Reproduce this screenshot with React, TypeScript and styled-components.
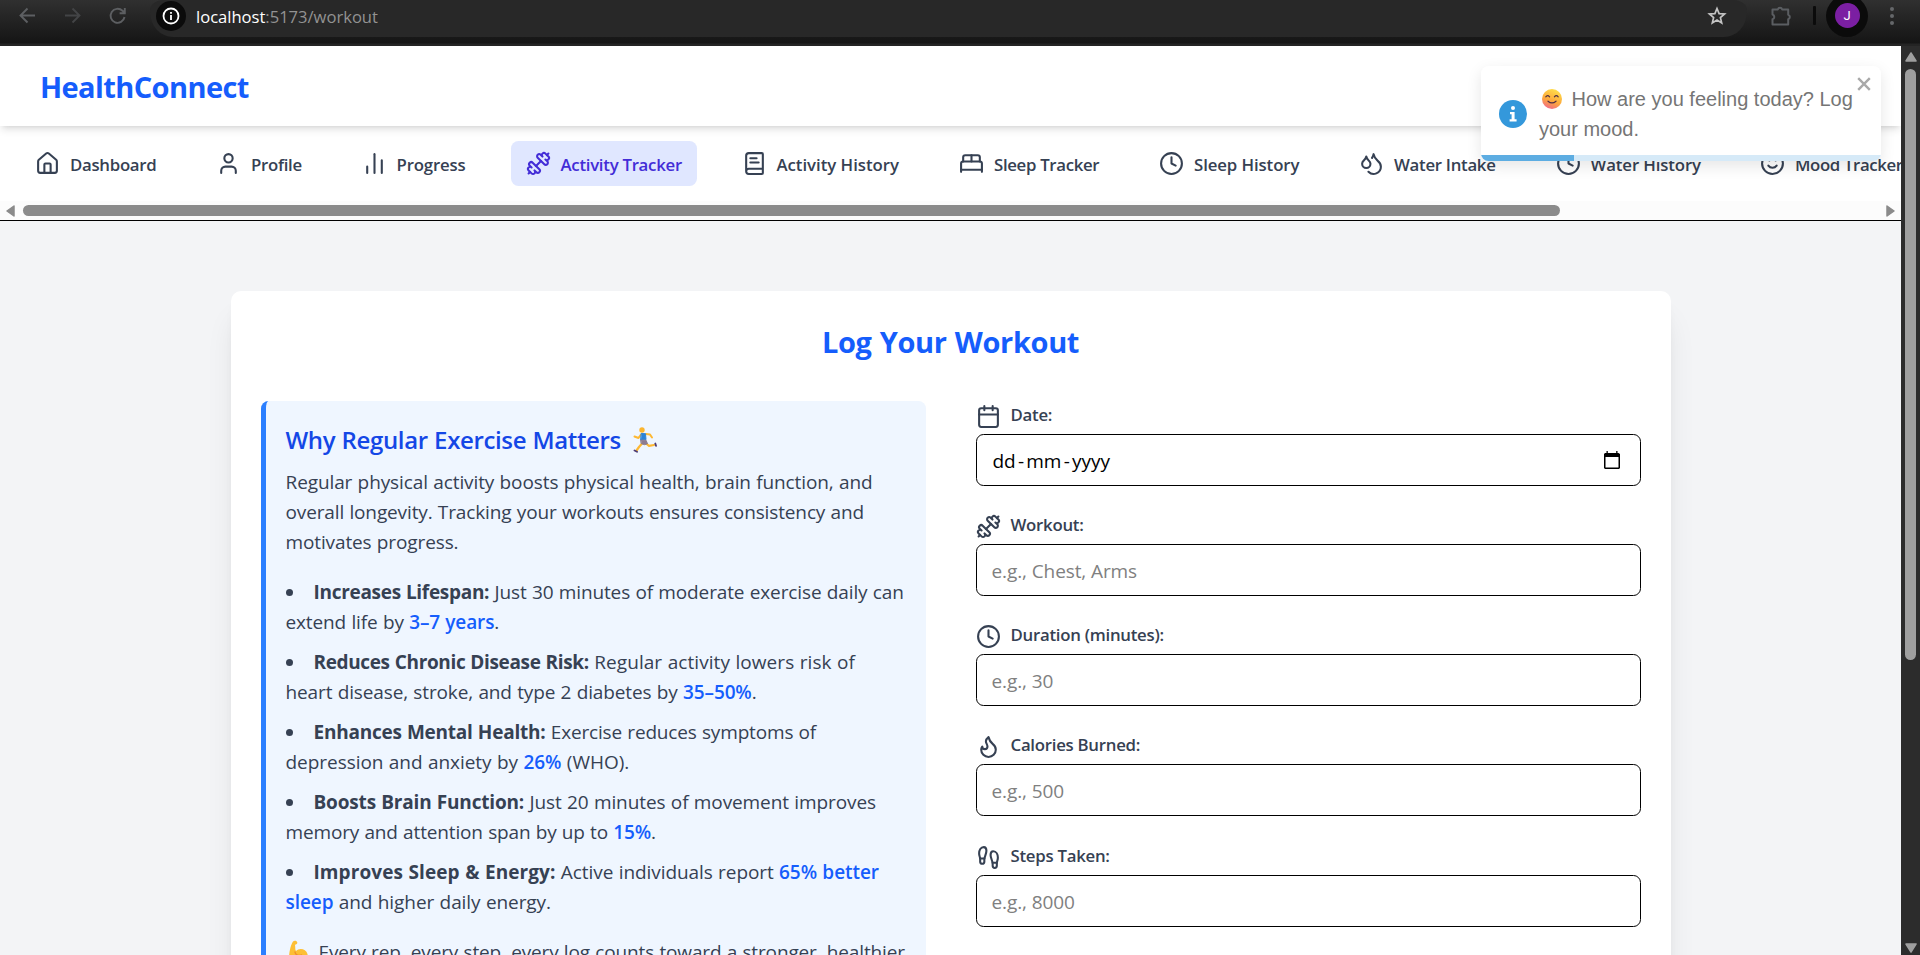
import React from "react";
import styled, { createGlobalStyle } from "styled-components";
import {
  BedDouble,
  BookText,
  Calendar,
  ChartNoAxesColumn,
  Clock,
  Droplets,
  Dumbbell,
  Flame,
  Footprints,
  House,
  Smile,
  User,
  type LucideIcon,
} from "lucide-react";

const GlobalStyle = createGlobalStyle`
  *, *::before, *::after { box-sizing: border-box; }
  html, body { margin: 0; padding: 0; overflow: hidden; }
  body { font-family: "Open Sans", "Noto Sans", sans-serif; color: #364153; }
  h1, h2, h3, p, ul { margin: 0; padding: 0; font-weight: inherit; }
`;

const Window = styled.div`
  display: flex;
  flex-direction: column;
  width: 1920px;
  height: 955px;
  overflow: hidden;
  background: #f3f4f6;
`;

/* ---------- Browser toolbar ---------- */

const BrowserBar = styled.div`
  display: flex;
  flex: none;
  height: 46px;
  padding-left: 18px;
  background: linear-gradient(#303030, #151515 43px, #242424 44px);
`;

const BrowserButtons = styled.div`
  display: flex;
  gap: 26px;
  width: 132px;
  height: 31px;
  align-items: center;
`;

const AddressBar = styled.div`
  display: flex;
  align-items: center;
  width: 1597px;
  height: 37px;
  padding: 0 20px 6px 6px;
  border-radius: 14px 14px 23px 23px / 10px 10px 25px 25px;
  background: #282828;
`;

const SiteInfo = styled.div`
  display: grid;
  place-items: center;
  width: 30px;
  height: 30px;
  border-radius: 50%;
  background: #0b0b0b;
`;

const Url = styled.div`
  flex: 1;
  padding: 2px 0 0 10px;
  font-size: 16.6px;
  letter-spacing: -0.02px;
  line-height: 24px;
  color: #929292;

  span {
    color: #fff;
  }
`;

const BrowserTools = styled.div`
  display: flex;
  align-items: center;
  height: 31px;
  padding-left: 23px;
`;

const ToolDivider = styled.div`
  width: 3px;
  height: 19px;
  margin: 0 10px 0 20px;
  border-radius: 1px;
  background: #0b0b0b;
`;

const AvatarRing = styled.div`
  display: grid;
  place-items: center;
  width: 42px;
  height: 42px;
  margin-right: 21px;
  border-radius: 50%;
  background: #0b0b0b;
`;

const Avatar = styled.div`
  display: grid;
  place-items: center;
  width: 25px;
  height: 25px;
  border-radius: 50%;
  background: #7b1fa2;
  color: #fff;
  font: 13px/25px Roboto, sans-serif;
`;

const Viewport = styled.div`
  display: flex;
  flex: 1;
  min-height: 0;
`;

const Page = styled.div`
  position: relative;
  width: 1901px;
  overflow: hidden;
`;

const VerticalScrollbar = styled.div`
  display: flex;
  flex-direction: column;
  align-items: center;
  width: 19px;
  padding: 6px 0 2px;
  background: #2c2c2c;
`;

const VerticalThumb = styled.div`
  width: 11px;
  height: 591px;
  margin: 7px 0 auto;
  border-radius: 6px;
  background: #9f9f9f;
`;

/* ---------- Page header and navigation ---------- */

const Header = styled.header`
  position: relative;
  z-index: 1;
  display: flex;
  align-items: center;
  height: 80px;
  padding: 2px 40px 0;
  background: #fff;
  box-shadow: 0 5px 7.5px -1px rgba(0, 0, 0, 0.1), 0 2.5px 5px -2.5px rgba(0, 0, 0, 0.1);
`;

const Brand = styled.h1`
  font-size: 29px;
  line-height: 40px;
  font-weight: 700;
  letter-spacing: -0.6px;
  color: #155dfc;
`;

const Nav = styled.nav`
  height: 95px;
  border-bottom: 1px solid #000;
  background: #fff;
  overflow: hidden;
`;

const NavList = styled.div`
  display: flex;
  gap: 30px;
  height: 75px;
  padding: 15px 20px;
`;

const NavItem = styled.a<{ $width: number; $track: number; $active?: boolean }>`
  display: flex;
  flex: none;
  align-items: center;
  gap: 10px;
  width: ${(p) => p.$width}px;
  height: 45px;
  padding: 0 0 0 15px;
  border-radius: 7.5px;
  background: ${(p) => (p.$active ? "#e0e7ff" : "transparent")};
  color: ${(p) => (p.$active ? "#432dd7" : "#364153")};
  font-size: 16.8px;
  font-weight: 600;
  letter-spacing: ${(p) => p.$track}px;
  line-height: 25px;
  white-space: nowrap;

  svg {
    flex: none;
  }
  span {
    padding-top: 1px;
  }
`;

const HorizontalScrollbar = styled.div`
  display: flex;
  align-items: center;
  height: 19px;
  padding: 0 6px;
  background: #fcfcfc;
`;

const HorizontalThumb = styled.div`
  width: 1537px;
  height: 11px;
  margin: 0 auto 0 8px;
  border-radius: 6px;
  background: #8b8b8b;
`;

/* ---------- Toast ---------- */

const Toast = styled.div`
  position: absolute;
  z-index: 2;
  top: 20px;
  right: 20px;
  display: flex;
  flex-direction: column;
  width: 400px;
  height: 95px;
  border-radius: 7.5px;
  background: #fff;
  box-shadow: 0 5px 15px rgba(0, 0, 0, 0.1);
  overflow: hidden;
`;

const ToastBody = styled.div`
  display: flex;
  flex: 1;
  align-items: center;
  gap: 12px;
  padding: 6px 8px 0 18px;
`;

const ToastText = styled.p`
  flex: 1;
  font: 20px/30px "Liberation Sans", Arial, sans-serif;
  color: #757575;
  white-space: nowrap;

  svg {
    margin: 0 9.5px 0 3px;
    vertical-align: -3px;
  }
`;

const ToastClose = styled.button`
  position: absolute;
  top: 11px;
  right: 10px;
  display: flex;
  padding: 0;
  border: 0;
  background: none;
`;

const ToastProgress = styled.div`
  height: 6px;
  background: #d6eaf8;

  &::before {
    content: "";
    display: block;
    width: 93px;
    height: 6px;
    background: #5dade2;
  }
`;

/* ---------- Workout card ---------- */

const Card = styled.main`
  width: 1440px;
  height: 1100px;
  margin: 70px auto 0;
  padding: 30px;
  border-radius: 10px;
  background: #fff;
  box-shadow: 0 25px 31px -6px rgba(0, 0, 0, 0.1), 0 10px 12.5px -7.5px rgba(0, 0, 0, 0.1);
`;

const CardTitle = styled.h2`
  height: 80px;
  font-size: 29px;
  line-height: 42px;
  font-weight: 700;
  letter-spacing: -0.35px;
  word-spacing: 1px;
  text-align: center;
  color: #155dfc;
`;

const Columns = styled.div`
  display: grid;
  grid-template-columns: 1fr 1fr;
  gap: 50px;
  height: 900px;
`;

const InfoPanel = styled.section`
  padding: 21px 0 20px 20px;
  border-left: 5px solid #2b7fff;
  border-radius: 7.5px;
  background: #eff6ff;
  font-size: 19px;
  line-height: 30px;
  word-spacing: 0.5px;
  white-space: nowrap;
`;

const InfoTitle = styled.h3`
  display: flex;
  align-items: center;
  gap: 12px;
  height: 35px;
  margin-bottom: 10px;
  font-size: 24px;
  font-weight: 600;
  color: #1447e6;
`;

const Line = styled.span<{ $track?: number }>`
  display: block;
  letter-spacing: ${(p) => p.$track ?? -0.12}px;
`;

const Facts = styled.ul`
  display: flex;
  flex-direction: column;
  gap: 10px;
  margin: 20px 0;
  list-style: none;
`;

const Bullet = styled.i`
  display: inline-block;
  width: 7px;
  height: 7px;
  margin: 0 21px 3px 0;
  border-radius: 50%;
  background: #364153;
  vertical-align: baseline;
`;

const Strong = styled.strong<{ $track?: number }>`
  font-weight: 700;
  letter-spacing: ${(p) => p.$track ?? -0.3}px;
`;

const Stat = styled.span`
  font-weight: 600;
  color: #155dfc;
`;

const Closing = styled.p`
  display: flex;
  align-items: center;
  gap: 9px;
`;

const Form = styled.form`
  display: flex;
  flex-direction: column;
  gap: 25.1px;
  padding-top: 0.15px;
`;

const Field = styled.label`
  display: block;
`;

const FieldLabel = styled.span`
  display: flex;
  align-items: flex-end;
  gap: 10px;
  height: 33px;
  padding-bottom: 5px;
  font-size: 16.8px;
  font-weight: 600;
  letter-spacing: -0.26px;
  line-height: 25px;

  span {
    padding-bottom: 2px;
  }
`;

const InputBox = styled.span`
  display: flex;
  align-items: center;
  height: 52px;
  padding: 0 20px 0 15px;
  border: 1px solid #000;
  border-radius: 7.5px;
`;

const Input = styled.input`
  flex: 1;
  height: 32px;
  padding: 2px 0 0;
  border: 0;
  outline: 0;
  background: none;
  color: #000;
  font: 19px/30px "Open Sans", "Noto Sans", sans-serif;
  letter-spacing: -0.1px;

  &::placeholder {
    color: #808080;
    opacity: 1;
  }
`;

const DateValue = styled.span`
  display: flex;
  flex: 1;
  gap: 2.2px;
  padding: 2px 0 0 1px;
  color: #000;
  font-size: 19px;
  line-height: 30px;
`;

/* ---------- Drawings ---------- */

const Arrow = ({ points, width, height, color }: { points: string; width: number; height: number; color: string }) => (
  <svg width={width} height={height} viewBox={`0 0 ${width} ${height}`}>
    <polygon points={points} fill={color} stroke={color} strokeWidth="1.5" strokeLinejoin="round" />
  </svg>
);

const BackIcon = ({ color, flip }: { color: string; flip?: boolean }) => (
  <svg width="19" height="19" viewBox="0 0 19 19" fill="none" stroke={color} strokeWidth="1.9">
    <path d={flip ? "M2 9.5h14M9.5 2.5l7 7-7 7" : "M17 9.5H3M9.5 2.5l-7 7 7 7"} />
  </svg>
);

const ReloadIcon = () => (
  <svg width="20" height="20" viewBox="0 0 20 20" fill="none" stroke="#5d5f62" strokeWidth="1.9">
    <path d="M16.500 11a7 7 0 1 1-2-6.200L16.800 7M16.800 2v5.200h-5.200" />
  </svg>
);

const SiteInfoIcon = () => (
  <svg width="18" height="18" viewBox="0 0 18 18" fill="none" stroke="#fff" strokeWidth="1.8">
    <circle cx="9" cy="9" r="7.500" />
    <path d="M9 8v5M9 5v1.800" />
  </svg>
);

const StarIcon = () => (
  <svg width="20" height="20" viewBox="0 0 20 20" fill="none" stroke="#c4c4c4" strokeWidth="1.700">
    <path d="M10 2.500l2.100 5.100 5.500.400-4.200 3.600 1.300 5.400-4.700-2.900-4.700 2.900 1.300-5.400L2.400 8l5.500-.4z" />
  </svg>
);

const PuzzleIcon = () => (
  <svg width="23" height="22" viewBox="0 0 23 22" fill="none" stroke="#5b5e62" strokeWidth="2" strokeLinejoin="round">
    <path d="M2.500 4.500h5.300a2.300 2.300 0 0 1 4.400 0h6v5.300a2.300 2.300 0 0 1 0 4.400v5.300H2.500v-5.200a2.500 2.500 0 0 0 0-4.800z" />
  </svg>
);

const MenuDots = () => (
  <svg width="6" height="20" viewBox="0 0 6 20" fill="#65676a">
    <circle cx="3" cy="3" r="2" />
    <circle cx="3" cy="10" r="2" />
    <circle cx="3" cy="17" r="2" />
  </svg>
);

const InfoBadge = () => (
  <svg width="28" height="28" viewBox="0 0 28 28">
    <circle cx="14" cy="14" r="14" fill="#3498db" />
    <circle cx="14" cy="8" r="2" fill="#fff" />
    <path d="M11 12h4.600v7.200h2V21.500h-7v-2.300h2v-5H11z" fill="#fff" />
  </svg>
);

const SmileEmoji = () => (
  <svg width="20" height="20" viewBox="0 0 20 20">
    <defs>
      <linearGradient id="face" x1=".7" y1="0" x2=".3" y2="1">
        <stop offset="0" stopColor="#ffe04a" />
        <stop offset=".6" stopColor="#fca63c" />
        <stop offset="1" stopColor="#f0688c" />
      </linearGradient>
    </defs>
    <circle cx="10" cy="10" r="10" fill="url(#face)" />
    <path d="M3.800 7.800q1.700-2.500 3.800 0M12.400 7.800q1.900-2.500 3.800 0M6 12.200q4 3.400 8 0" fill="none" stroke="#4f2f45" strokeWidth="1.200" strokeLinecap="round" />
  </svg>
);

const RunnerEmoji = () => (
  <svg width="24" height="26" viewBox="0 0 24 26" fill="none" strokeLinecap="round" strokeLinejoin="round">
    <path d="M9.500 16l-3.500 4-2.500 3.500M13 16.500l3 2.300 5-.800" stroke="#fdb833" strokeWidth="2.200" />
    <path d="M8 7.500l-2.500 3.500-4-1.500M13 7l4 .5 2 3" stroke="#fdb833" strokeWidth="2" />
    <path d="M8.500 6.500l4 .2.500 6-5 .300z" fill="#2c83d8" stroke="#2c83d8" />
    <path d="M8 13.200h5l1.500 3.500-3 1-3-1z" fill="#8d7c91" stroke="#8d7c91" />
    <circle cx="9" cy="3" r="2.700" fill="#fbb52f" />
    <path d="M1.500 23.500l2.500 1.300M22.300 16.500l.700 2.300" stroke="#4b3a73" strokeWidth="1.800" />
  </svg>
);

const MuscleEmoji = () => (
  <svg width="24" height="24" viewBox="0 0 24 24">
    <path d="M7 1.500C8.500.3 11 .8 11.300 2.500c.2 1.500-.8 2-2.300 2.300C9.500 8 9 10 10 11c3-3.500 10-2.500 11.500 3 .8 4-2 8-9 8.500-5 .2-9-1.500-9.500-4.500C3 13 4.500 5 7 1.500z" fill="#fdbf35" />
    <path d="M9 12c.5 3 3.500 4.300 6.500 3" fill="none" stroke="#ee8f2d" strokeWidth="1.300" strokeLinecap="round" />
  </svg>
);

const DatePickerIcon = () => (
  <svg width="16" height="18" viewBox="0 0 16 18">
    <path d="M2.500 0h1.300v2h8.400V0h1.300v2H14.500L16 3v14l-1 1H1l-1-1V3l1-1h1.500zM1.500 6v10.500h13V6z" fill="#000" fillRule="evenodd" />
  </svg>
);

const CloseIcon = () => (
  <svg width="14" height="14" viewBox="0 0 14 14" stroke="#a9a9a9" strokeWidth="2.400">
    <path d="M1.200 1.200l11.600 11.600M12.800 1.200L1.200 12.800" />
  </svg>
);

/* ---------- Content ---------- */

const navItems: { label: string; icon: LucideIcon; width: number; track: number; active?: boolean }[] = [
  { label: "Dashboard", icon: House, width: 151, track: -0.28 },
  { label: "Profile", icon: User, width: 115.5, track: -0.3 },
  { label: "Progress", icon: ChartNoAxesColumn, width: 134, track: -0.17 },
  { label: "Activity Tracker", icon: Dumbbell, width: 186, track: -0.27, active: true },
  { label: "Activity History", icon: BookText, width: 187.5, track: -0.03 },
  { label: "Sleep Tracker", icon: BedDouble, width: 170, track: -0.32 },
  { label: "Sleep History", icon: Clock, width: 170, track: -0.1 },
  { label: "Water Intake", icon: Droplets, width: 166.5, track: -0.28 },
  { label: "Water History", icon: Clock, width: 174.5, track: -0.13 },
  { label: "Mood Tracker", icon: Smile, width: 174, track: -0.36 },
];

const fields: { label: string; icon: LucideIcon; placeholder?: string }[] = [
  { label: "Date:", icon: Calendar },
  { label: "Workout:", icon: Dumbbell, placeholder: "e.g., Chest, Arms" },
  { label: "Duration (minutes):", icon: Clock, placeholder: "e.g., 30" },
  { label: "Calories Burned:", icon: Flame, placeholder: "e.g., 500" },
  { label: "Steps Taken:", icon: Footprints, placeholder: "e.g., 8000" },
];

export default function App() {
  return (
    <Window>
      <GlobalStyle />
      <BrowserBar>
        <BrowserButtons>
          <BackIcon color="#5d5f62" />
          <BackIcon color="#434446" flip />
          <ReloadIcon />
        </BrowserButtons>
        <AddressBar>
          <SiteInfo>
            <SiteInfoIcon />
          </SiteInfo>
          <Url>
            <span>localhost</span>:5173/workout
          </Url>
          <StarIcon />
        </AddressBar>
        <BrowserTools>
          <PuzzleIcon />
          <ToolDivider />
          <AvatarRing>
            <Avatar>J</Avatar>
          </AvatarRing>
          <MenuDots />
        </BrowserTools>
      </BrowserBar>

      <Viewport>
        <Page>
          <Header>
            <Brand>HealthConnect</Brand>
          </Header>
          <Nav>
            <NavList>
              {navItems.map(({ label, icon: Icon, width, track, active }) => (
                <NavItem key={label} $width={width} $track={track} $active={active}>
                  <Icon size={25} />
                  <span>{label}</span>
                </NavItem>
              ))}
            </NavList>
            <HorizontalScrollbar>
              <Arrow points="8,1 8,11 1,6" width={9} height={12} color="#8b8b8b" />
              <HorizontalThumb />
              <Arrow points="1,1 1,11 8,6" width={9} height={12} color="#8b8b8b" />
            </HorizontalScrollbar>
          </Nav>

          <Toast>
            <ToastBody>
              <InfoBadge />
              <ToastText>
                <SmileEmoji />
                How are you feeling today? Log
                <br />
                your mood.
              </ToastText>
            </ToastBody>
            <ToastClose>
              <CloseIcon />
            </ToastClose>
            <ToastProgress />
          </Toast>

          <Card>
            <CardTitle>Log Your Workout</CardTitle>
            <Columns>
              <InfoPanel>
                <InfoTitle>
                  <Line $track={-0.36}>Why Regular Exercise Matters</Line>
                  <RunnerEmoji />
                </InfoTitle>
                <p>
                  <Line $track={-0.1}>Regular physical activity boosts physical health, brain function, and</Line>
                  <Line $track={-0.13}>overall longevity. Tracking your workouts ensures consistency and</Line>
                  <Line>motivates progress.</Line>
                </p>
                <Facts>
                  <li>
                    <Line>
                      <Bullet />
                      <Strong>Increases Lifespan:</Strong> Just 30 minutes of moderate exercise daily can
                    </Line>
                    <Line>
                      extend life by <Stat>3–7 years</Stat>.
                    </Line>
                  </li>
                  <li>
                    <Line $track={0.06}>
                      <Bullet />
                      <Strong $track={-0.36}>Reduces Chronic Disease Risk:</Strong> Regular activity lowers risk of
                    </Line>
                    <Line>
                      heart disease, stroke, and type 2 diabetes by <Stat>35–50%</Stat>.
                    </Line>
                  </li>
                  <li>
                    <Line $track={-0.16}>
                      <Bullet />
                      <Strong $track={-0.23}>Enhances Mental Health:</Strong> Exercise reduces symptoms of
                    </Line>
                    <Line $track={-0.04}>
                      depression and anxiety by <Stat>26%</Stat> (WHO).
                    </Line>
                  </li>
                  <li>
                    <Line $track={-0.09}>
                      <Bullet />
                      <Strong $track={-0.17}>Boosts Brain Function:</Strong> Just 20 minutes of movement improves
                    </Line>
                    <Line $track={-0.15}>
                      memory and attention span by up to <Stat>15%</Stat>.
                    </Line>
                  </li>
                  <li>
                    <Line $track={-0.07}>
                      <Bullet />
                      <Strong $track={0.08}>Improves Sleep &amp; Energy:</Strong> Active individuals report <Stat>65% better</Stat>
                    </Line>
                    <Line $track={-0.07}>
                      <Stat>sleep</Stat> and higher daily energy.
                    </Line>
                  </li>
                </Facts>
                <Closing>
                  <MuscleEmoji />
                  <Line $track={-0.14}>Every rep, every step, every log counts toward a stronger, healthier</Line>
                </Closing>
              </InfoPanel>

              <Form>
                {fields.map(({ label, icon: Icon, placeholder }) => (
                  <Field key={label}>
                    <FieldLabel>
                      <Icon size={25} />
                      <span>{label}</span>
                    </FieldLabel>
                    <InputBox>
                      {placeholder ? (
                        <Input placeholder={placeholder} />
                      ) : (
                        <>
                          <DateValue>
                            <span>dd</span>
                            <span>-</span>
                            <span>mm</span>
                            <span>-</span>
                            <span>yyyy</span>
                          </DateValue>
                          <DatePickerIcon />
                        </>
                      )}
                    </InputBox>
                  </Field>
                ))}
              </Form>
            </Columns>
          </Card>
        </Page>
        <VerticalScrollbar>
          <Arrow points="7,1 12,9 2,9" width={14} height={10} color="#9f9f9f" />
          <VerticalThumb />
          <Arrow points="7,9 12,1 2,1" width={14} height={10} color="#9f9f9f" />
        </VerticalScrollbar>
      </Viewport>
    </Window>
  );
}
